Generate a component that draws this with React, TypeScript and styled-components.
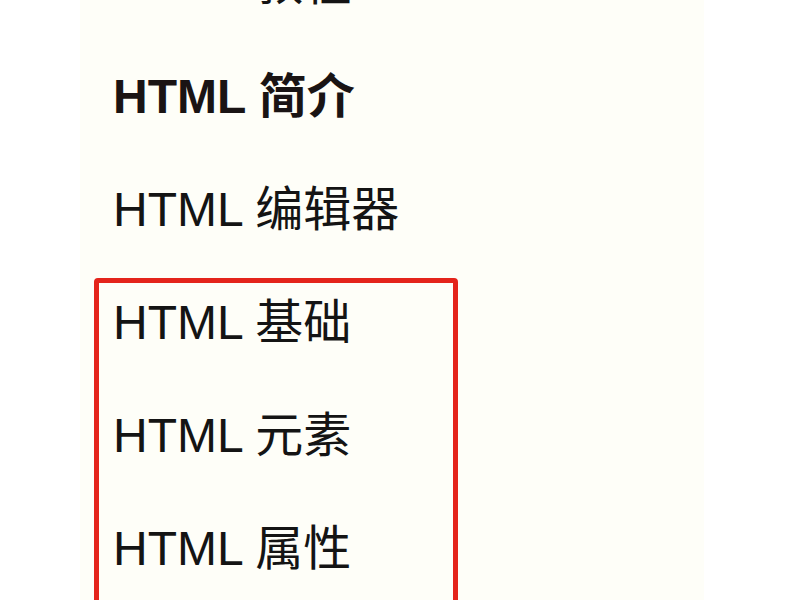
import React from "react";
import styled, { createGlobalStyle } from "styled-components";

const Global = createGlobalStyle`
  html, body {
    margin: 0;
    padding: 0;
    background: #ffffff;
    overflow: hidden;
  }
  body {
    width: 800px;
    height: 600px;
  }
`;

const Page = styled.div`
  width: 800px;
  height: 600px;
  display: flex;
  background: #ffffff;
  overflow: hidden;
`;

const Sidebar = styled.nav`
  margin-left: 80px;
  width: 624px;
  height: 600px;
  background: #fefef8;
  padding-left: 33px;
  box-sizing: border-box;
  overflow: hidden;
`;

const List = styled.ul`
  list-style: none;
  margin: -73px 0 0 0;
  padding: 0;
`;

const Item = styled.li<{ $bold?: boolean }>`
  height: 113px;
  line-height: 113px;
  font-family: "Liberation Sans", Arial, "Noto Sans CJK SC", sans-serif;
  font-size: 48px;
  font-weight: ${(p) => (p.$bold ? 700 : 400)};
  color: ${(p) => (p.$bold ? "#1a1414" : "#141414")};
  white-space: nowrap;
`;

const Group = styled.div`
  position: relative;
  &::before {
    content: "";
    position: absolute;
    top: 12px;
    left: -19px;
    width: 364px;
    height: 400px;
    box-sizing: border-box;
    border: 5px solid #e4241b;
    border-radius: 4px;
    pointer-events: none;
  }
`;

export default function App() {
  return (
    <Page>
      <Global />
      <Sidebar>
        <List>
          <Item>HTML 教程</Item>
          <Item $bold>HTML 简介</Item>
          <Item>HTML 编辑器</Item>
          <Group>
            <Item>HTML 基础</Item>
            <Item>HTML 元素</Item>
            <Item>HTML 属性</Item>
          </Group>
        </List>
      </Sidebar>
    </Page>
  );
}
